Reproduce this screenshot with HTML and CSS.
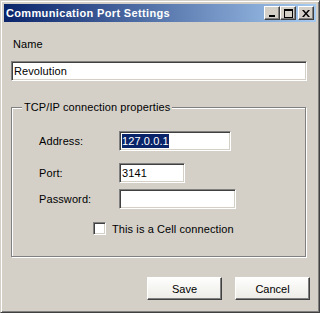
FILE: index.html
```
<!DOCTYPE html>
<html lang="en">
<head>
    <meta charset="UTF-8">
    <title>Communication Port Settings</title>
    <link rel="stylesheet" href="styles.css">
</head>
<body>

    <div class="window">
        <!-- Barre de titre -->
        <div class="titlebar">
            <span class="title">Communication Port Settings</span>
            <div class="caption-btns">
                <div class="cap-btn">
                    <svg width="8" height="7" viewBox="0 0 8 7"><rect x="1" y="5" width="6" height="2" fill="#000"/></svg>
                </div>
                <div class="cap-btn">
                    <svg width="9" height="9" viewBox="0 0 9 9"><rect x="0.5" y="0.5" width="8" height="8" fill="none" stroke="#000"/><rect x="0" y="0" width="9" height="2" fill="#000"/></svg>
                </div>
                <div class="cap-btn close">
                    <svg width="8" height="7" viewBox="0 0 8 7"><path d="M0 0h2l2 2.5 2-2.5h2l-3 3.5 3 3.5h-2l-2-2.5-2 2.5h-2l3-3.5z" fill="#000"/></svg>
                </div>
            </div>
        </div>

        <div class="content">
            <div class="name-label">Name</div>
            <div class="field name-field">Revolution</div>

            <fieldset class="group">
                <legend>TCP/IP connection properties</legend>
                <div class="rows">
                    <div class="row">
                        <span class="label">Address:</span>
                        <div class="field address"><span class="sel">127.0.0.1</span></div>
                    </div>
                    <div class="row port-row">
                        <span class="label">Port:</span>
                        <div class="field port">3141</div>
                    </div>
                    <div class="row pass-row">
                        <span class="label">Password:</span>
                        <div class="field password"></div>
                    </div>
                </div>
                <label class="check">
                    <span class="box"></span>
                    This is a Cell connection
                </label>
            </fieldset>
        </div>

        <div class="footer">
            <button class="btn">Save</button>
            <button class="btn">Cancel</button>
        </div>
    </div>

</body>
</html>
```

FILE: styles.css
```
* {
    box-sizing: border-box;
    margin: 0;
    padding: 0;
}

body {
    font-family: "Liberation Sans", Arial, sans-serif;
    font-size: 11px;
    letter-spacing: 0.1px;
    color: #000;
    background-color: #d4d0c8;
}

.window {
    width: 320px;
    height: 313px;
    background-color: #d4d0c8;
    border: 1px solid;
    border-color: #d4d0c8 #404040 #404040 #d4d0c8;
    box-shadow: inset 1px 1px #fff, inset -1px -1px #808080;
    padding: 3px;
}

/* Title bar */
.titlebar {
    height: 18px;
    background: linear-gradient(to right, #0a246a, #a6caf0);
    display: flex;
    align-items: center;
    justify-content: space-between;
    padding-left: 2px;
    padding-right: 2px;
}

.title {
    color: #fff;
    font-weight: bold;
    font-size: 11px;
    letter-spacing: 0.35px;
}

.caption-btns {
    display: flex;
}

.cap-btn {
    width: 16px;
    height: 14px;
    background-color: #d4d0c8;
    border: 1px solid;
    border-color: #fff #404040 #404040 #fff;
    box-shadow: inset -1px -1px #808080;
    display: flex;
    align-items: center;
    justify-content: center;
}

.cap-btn.close {
    margin-left: 2px;
}

/* Form */
.content {
    padding: 16px 9px 0 7px;
}

.name-label {
    padding-left: 2px;
    line-height: 13px;
}

.field {
    height: 20px;
    background-color: #fff;
    border: 1px solid;
    border-color: #808080 #fff #fff #808080;
    box-shadow: inset 1px 1px #404040, inset -1px -1px #d4d0c8;
    padding: 0 2px;
    line-height: 18px;
    white-space: nowrap;
}

.name-field {
    margin-top: 10px;
    width: 296px;
}

.group {
    margin-top: 20px;
    width: 295px;
    height: 156px;
    border: 1px solid #808080;
    box-shadow: inset 1px 1px #fff, 1px 1px #fff;
    padding: 0 0 0 10px;
}

.group legend {
    padding: 0 2px;
    line-height: 13px;
    background-color: #d4d0c8;
}

.rows {
    margin-top: 17px;
    padding-left: 17px;
}

.row {
    display: flex;
    align-items: center;
}

.label {
    width: 80px;
}

.port-row {
    margin-top: 12px;
}

.pass-row {
    margin-top: 6px;
}

.address {
    width: 112px;
}

.sel {
    background-color: #0a246a;
    color: #fff;
    padding: 1px 0;
}

.port {
    width: 66px;
}

.password {
    width: 117px;
}

.check {
    display: flex;
    align-items: center;
    gap: 6px;
    margin-top: 13px;
    padding-left: 71px;
}

.box {
    width: 13px;
    height: 13px;
    background-color: #fff;
    border: 1px solid;
    border-color: #808080 #fff #fff #808080;
    box-shadow: inset 1px 1px #404040, inset -1px -1px #d4d0c8;
}

/* Buttons */
.footer {
    display: flex;
    justify-content: flex-end;
    gap: 13px;
    margin-top: 20px;
    padding-right: 6px;
}

.btn {
    width: 75px;
    height: 23px;
    font-family: "Liberation Sans", Arial, sans-serif;
    font-size: 11px;
    color: #000;
    background: linear-gradient(#fefefd, #ecebe6);
    border: 1px solid;
    border-color: #fff #404040 #404040 #fff;
    box-shadow: inset -1px -1px #808080;
}
```
